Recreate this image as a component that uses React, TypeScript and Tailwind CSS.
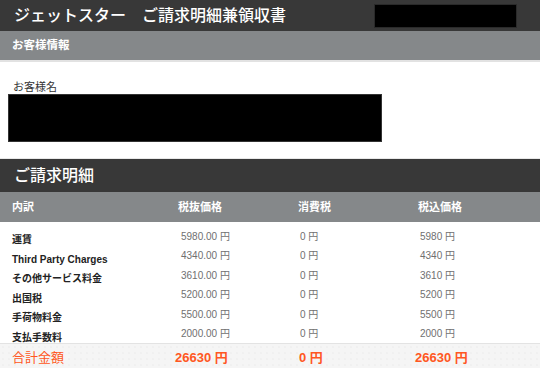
const font = { fontFamily: '"Liberation Sans", "Noto Sans CJK JP", sans-serif' };

const rows = [
  { name: "運賃", base: "5980.00 円", tax: "0 円", total: "5980 円" },
  { name: "Third Party Charges", base: "4340.00 円", tax: "0 円", total: "4340 円" },
  { name: "その他サービス料金", base: "3610.00 円", tax: "0 円", total: "3610 円" },
  { name: "出国税", base: "5200.00 円", tax: "0 円", total: "5200 円" },
  { name: "手荷物料金", base: "5500.00 円", tax: "0 円", total: "5500 円" },
  { name: "支払手数料", base: "2000.00 円", tax: "0 円", total: "2000 円" },
];

export default function App() {
  return (
    <div className="w-[540px] h-[368px] overflow-hidden bg-white" style={font}>
      <div className="h-[31px] bg-[#383838] flex items-center">
        <span className="pl-[14px] text-[16px] font-medium text-white whitespace-pre">ジェットスター　ご請求明細兼領収書</span>
        <div className="ml-auto mr-[23px] w-[143px] h-[24px] bg-black border border-[#2a2a2a]" />
      </div>
      <div className="h-[29px] bg-[#85888a] flex items-center pl-3">
        <span className="text-[11.5px] font-bold text-white">お客様情報</span>
      </div>
      <div className="h-[99px] border-t-2 border-[#e2e2e2] border-b border-b-[#e8e8e8] pt-[18px]">
        <div className="pl-[13px] text-[11px] leading-[14px] text-[#333]">お客様名</div>
        <div className="ml-2 w-[374px] h-[48px] bg-black border border-[#333]" />
      </div>
      <div className="h-[33px] bg-[#383838] flex items-center pl-[14px]">
        <span className="text-[16px] font-medium text-white">ご請求明細</span>
      </div>
      <div className="h-[30px] bg-[#85888a] grid grid-cols-[166px_120px_120px_1fr] items-center pl-3 text-[11px] font-bold text-white">
        <span>内訳</span>
        <span>税抜価格</span>
        <span>消費税</span>
        <span>税込価格</span>
      </div>
      <div className="pt-[5px] h-[121px]">
        {rows.map((r, i) => (
          <div key={i} className="h-[19.5px] grid grid-cols-[166px_120px_120px_1fr] items-center pl-3 text-[10px] leading-[12px]">
            <span className="font-bold text-[#222] pt-[7px]">{r.name}</span>
            <span className="pl-[3px] text-[#707070]">{r.base}</span>
            <span className="pl-[2px] text-[#707070]">{r.tax}</span>
            <span className="pl-[2px] text-[#707070]">{r.total}</span>
          </div>
        ))}
      </div>
      <div className="h-[30px] border-t border-[#e3e3e3] bg-[#f5f5f5] bg-[radial-gradient(#e9e9e9_0.6px,transparent_0.8px)] bg-[size:6px_6px] grid grid-cols-[163px_124px_116px_1fr] items-center pl-3 text-[#ff5722]">
        <span className="text-[13px] pb-[2px]">合計金額</span>
        <span className="text-[13px] font-bold pb-[2px]">26630 円</span>
        <span className="text-[13px] font-bold pb-[2px]">0 円</span>
        <span className="text-[13px] font-bold pb-[2px]">26630 円</span>
      </div>
    </div>
  );
}
